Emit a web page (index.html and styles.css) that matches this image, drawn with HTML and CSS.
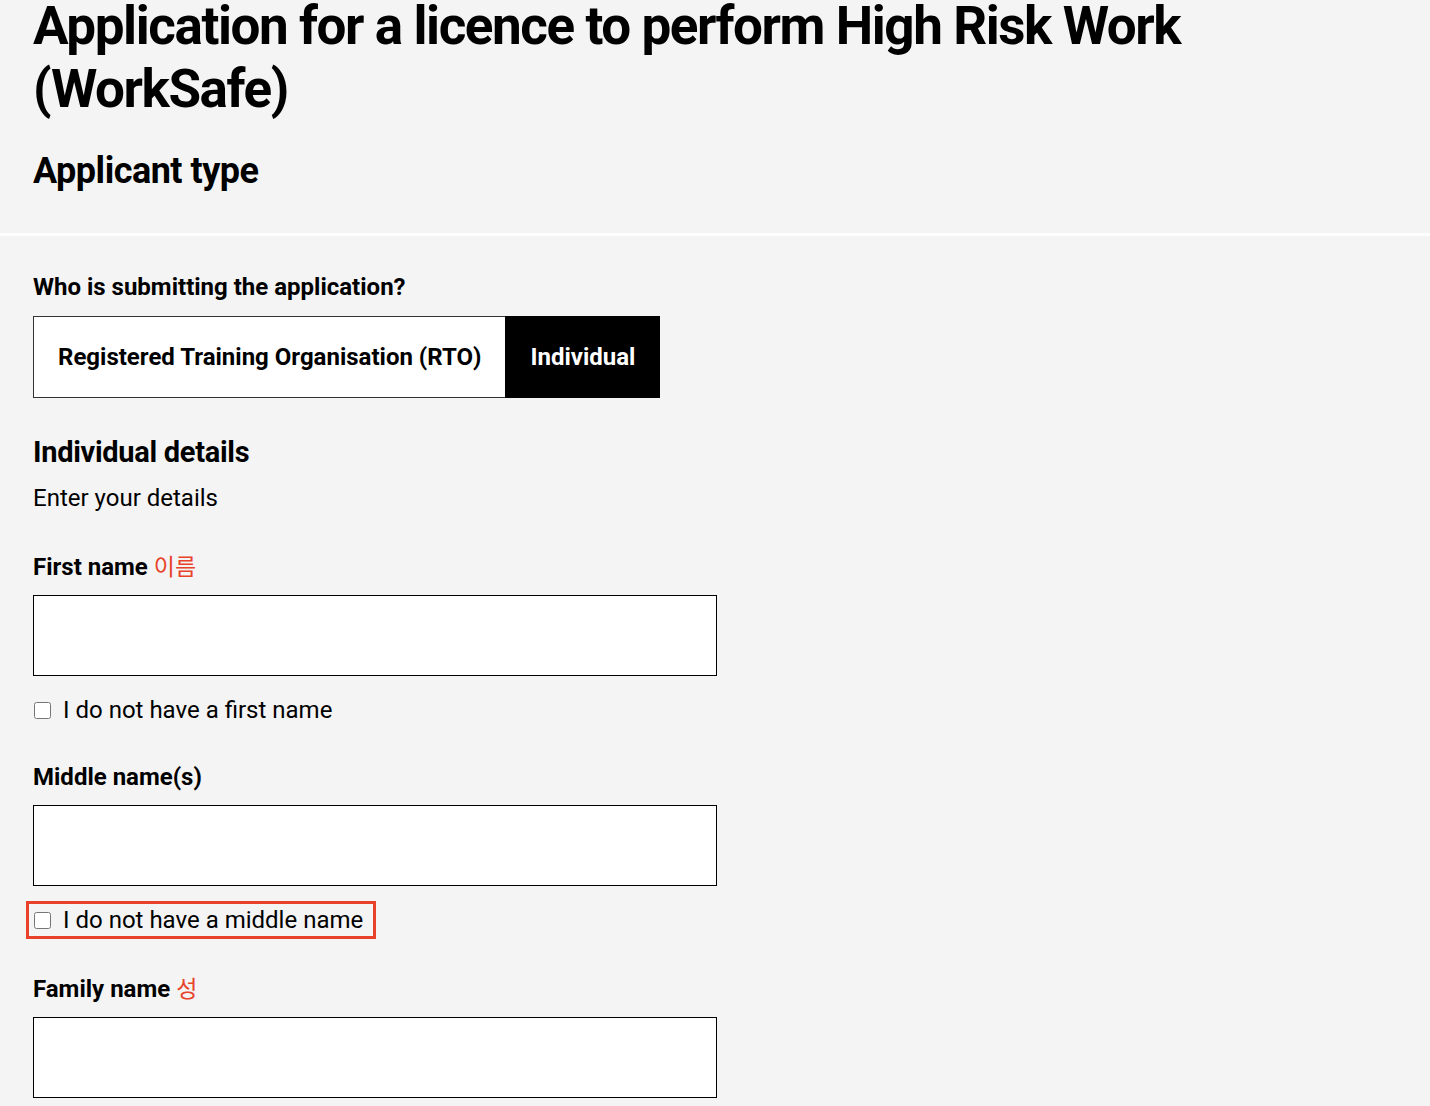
FILE: index.html
```html
<!DOCTYPE html>
<html lang="en">
<head>
<meta charset="utf-8">
<title>Application for a licence to perform High Risk Work (WorkSafe)</title>
<link rel="stylesheet" href="styles.css">
</head>
<body>
<header class="page-head">
  <h1 class="title">Application for a licence to perform High Risk Work (WorkSafe)</h1>
  <h2 class="step">Applicant type</h2>
</header>
<main class="form">
  <div class="field">
    <p class="q-label">Who is submitting the application?</p>
    <div class="segmented">
      <button class="seg">Registered Training Organisation (RTO)</button>
      <button class="seg seg-active">Individual</button>
    </div>
  </div>
  <section class="details">
    <h3 class="sub">Individual details</h3>
    <p class="hint">Enter your details</p>

    <div class="field-group">
      <label class="label">First name <span class="ko">이름</span></label>
      <input class="text-input" type="text">
      <label class="check"><input type="checkbox"><span>I do not have a first name</span></label>
    </div>

    <div class="field-group">
      <label class="label">Middle name(s)</label>
      <input class="text-input" type="text">
      <label class="check highlight"><input type="checkbox"><span>I do not have a middle name</span></label>
    </div>

    <div class="field-group">
      <label class="label">Family name <span class="ko">성</span></label>
      <input class="text-input" type="text">
    </div>
  </section>
</main>
</body>
</html>
```
FILE: styles.css
```css
* { box-sizing: border-box; }
html, body { margin: 0; padding: 0; background: #f4f4f4; }
body {
  font-family: Roboto, "Noto Sans CJK KR", sans-serif;
  color: #000;
  overflow: hidden;
}
.page-head {
  padding: 0 33px 42px;
  border-bottom: 3px solid #fff;
}
.title {
  margin: -5px 0 0;
  font-size: 53px;
  line-height: 63px;
  font-weight: 700;
  letter-spacing: -1.43px;
  width: 1250px;
}
.step {
  margin: 30px 0 0;
  font-size: 36px;
  line-height: 40px;
  font-weight: 700;
  letter-spacing: -0.5px;
}
.form { padding: 37px 33px 0; }
.q-label {
  margin: 0 0 15px;
  font-size: 24px;
  line-height: 28px;
  font-weight: 700;
}
.segmented { display: flex; }
.seg {
  font-family: inherit;
  height: 82px;
  padding: 0 24px 0 24px;
  font-size: 24px;
  font-weight: 700;
  background: #fff;
  color: #000;
  border: 1px solid #333;
  border-right: 0;
  cursor: pointer;
}
.seg-active { background: #000; color: #fff; border-color: #000; padding-right: 25px; }
.details { padding-top: 37px; }
.sub {
  margin: 0;
  font-size: 29px;
  line-height: 34px;
  font-weight: 700;
  letter-spacing: -0.3px;
}
.hint {
  margin: 15px 0 0;
  font-size: 24px;
  line-height: 28px;
}
.field-group { margin-top: 39px; }
.field-group + .field-group { margin-top: 37px; }
.label {
  display: block;
  font-size: 24px;
  line-height: 28px;
  font-weight: 700;
  margin-bottom: 14px;
}
.ko { color: #e8432a; font-weight: 400; font-size: 23px; font-family: "Noto Sans CJK KR", sans-serif; }
.text-input {
  display: block;
  width: 684px;
  height: 81px;
  background: #fff;
  border: 1.5px solid #000;
  border-radius: 0;
  outline: none;
}
.check {
  display: inline-flex;
  align-items: center;
  gap: 12px;
  margin-top: 18px;
  font-size: 24px;
  line-height: 28px;
  padding: 2px 10px 2px 0;
}
.check input { width: 17px; height: 17px; margin: 0 0 0 1px; }
.highlight {
  outline: 3px solid #e8432a;
  outline-offset: 0;
  margin-left: -4px;
  padding-left: 4px;
}
```
